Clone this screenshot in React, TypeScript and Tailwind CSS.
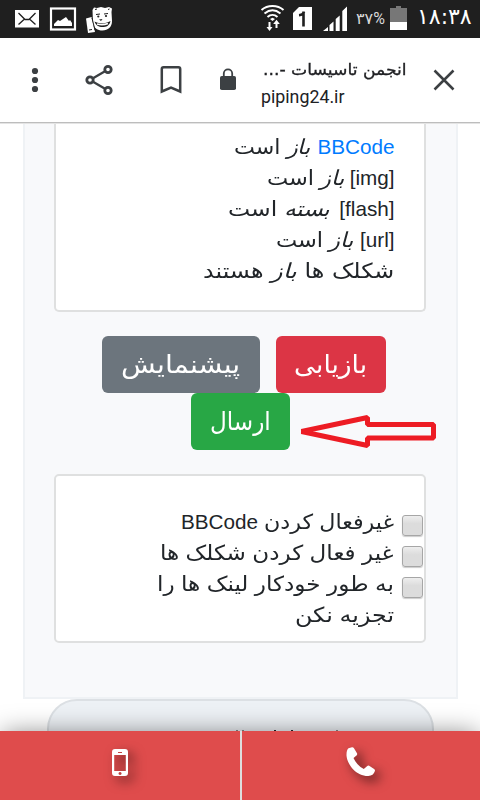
import React, { useLayoutEffect, useRef } from 'react';

// Stretches a run of text so that it fills the given width
function Fit({ width, children }: { width: number; children: React.ReactNode }) {
  const ref = useRef<HTMLSpanElement>(null);

  useLayoutEffect(() => {
    const el = ref.current;
    if (el) el.style.transform = `scaleX(${width / el.offsetWidth})`;
  }, [width]);

  return (
    <span className="inline-flex justify-start whitespace-nowrap" style={{ width }}>
      <span ref={ref} className="inline-block shrink-0 origin-right">{children}</span>
    </span>
  );
}

const statusRules = [
  { label: 'BBCode', state: 'باز', width: 76, gap: 'ml-[7px]', color: 'text-[#007bff]' },
  { label: '[img]', state: 'باز', width: 77, gap: 'ml-[6px]', color: '' },
  { label: '[flash]', state: 'بسته', width: 102, gap: 'ml-[9px]', color: '' },
  { label: '[url]', state: 'باز', width: 77, gap: 'ml-[7px]', color: '' },
];

function StatusBar() {
  return (
    <header dir="ltr" className="flex h-[38px] shrink-0 items-start bg-[#1f1f1f] text-white">
      <svg width="120" height="38" viewBox="0 0 120 38" fill="none">
        <rect x="15" y="10" width="24" height="17.500" fill="#fff" />
        <path d="M18.500 13l6.500 6.500h4l6.500-6.500M18.500 24.500l5.500-5M35.500 24.500l-5.500-5" stroke="#1f1f1f" strokeWidth="1.300" />
        <rect x="51" y="8.500" width="24" height="21" stroke="#fff" strokeWidth="2.200" />
        <path d="M54 26v-2l4-4 2 1 6-4 3 4 1-1 2 3v3z" fill="#fff" />
        <path d="M92.500 10l1.500-2.500 3 .5 4-1 4 1 4-1 3 1.500-.5 3.500.5 9c0 6-4 9.500-9.500 9.500-5 0-8.500-2.500-9.500-7z" fill="#fff" />
        <path d="M86 18.500l5.500-1.500 3.500 15-7 1z" fill="#fff" />
        <path d="M92 18l3 12M89 30l3-.5M96 14.500l4-.5M104 14l4-.5M95 9.500l2-.5M108 9.500l1.500-.5" stroke="#1f1f1f" strokeWidth="1" />
        <circle cx="98.300" cy="16.500" r="1.100" fill="#1f1f1f" />
        <circle cx="106" cy="16" r="1.100" fill="#1f1f1f" />
        <path d="M99 19.500l3.500-.5-1.500 2z" fill="#1f1f1f" />
        <path d="M94.500 21.500c4 2.500 11 2.500 16-.5-1 5-4.500 6-8 6-4 0-6.500-1.500-8-5.500z" fill="#1f1f1f" />
        <path d="M97 23.900c3.500 1 7.500.9 11-.5" stroke="#fff" strokeWidth="1.600" />
      </svg>
      <svg className="ml-[136px]" width="96" height="38" viewBox="256 0 96 38" fill="none">
        <path d="M261.500 10c6-5.300 16-5.300 22 0M264.500 13.500c5-4 11-4 16 0M267.500 17c3-2.600 7-2.600 10 0" stroke="#fff" strokeWidth="2" />
        <path d="M270 19l2.500-1.300L275 19l-2.500 2zM268.500 22h2v5h2l-3 4-3-4h2zM275.500 28h2v-4h2.300l-3.300-4.300-3.300 4.300h2.300z" fill="#fff" />
        <path d="M299 7h13v23h-19V13z" fill="#fff" />
        <path d="M303.500 11.500v15M304 12c-.6 2-2 3-5 3.200" stroke="#1f1f1f" strokeWidth="2.600" />
        <path d="M323 31l5-4v4zM329.500 31v-6l4-3.500V31zM335.700 31V19l4-3.500V31zM342.300 31V11l4.700-4.500V31z" fill="#fff" />
      </svg>
      <span className="mt-[9px] ml-[4px] w-[34px] whitespace-nowrap font-['Roboto','DejaVu_Sans',sans-serif] text-[16px] leading-[20px] text-[#d8d8d8]">۳۷%</span>
      <svg width="18" height="38" viewBox="0 0 18 38">
        <path d="M0 8h6V6h5v2h6v14H0z" fill="#777" />
        <rect y="22" width="17" height="8" fill="#fff" />
      </svg>
      <span className="mt-[3px] ml-[9px] whitespace-nowrap font-['DejaVu_Sans',sans-serif] text-[22px] leading-[28px]">۱۸:۳۸</span>
    </header>
  );
}

function Toolbar() {
  return (
    <nav dir="ltr" className="relative z-10 flex h-[85px] shrink-0 border-b border-[#bdbdbd] bg-white shadow-[0_1px_0_#e4e4e4]">
      <svg width="256" height="84" viewBox="0 38 256 84" fill="none" stroke="#3c4043">
        <g fill="#3c4043" stroke="none">
          <circle cx="35" cy="71" r="3.100" />
          <circle cx="35" cy="80" r="3.100" />
          <circle cx="35" cy="89" r="3.100" />
          <rect x="220" y="76" width="16" height="14" rx="1.800" />
        </g>
        <path d="M108 69.500L90 80l18 10.500" strokeWidth="2.300" />
        <g fill="#fff" strokeWidth="2.800">
          <circle cx="108" cy="69.500" r="3.200" />
          <circle cx="90" cy="80" r="3.200" />
          <circle cx="108" cy="90.500" r="3.200" />
        </g>
        <path d="M161.800 91.500V69q0-1.700 1.700-1.700h15q1.700 0 1.700 1.700v22.500l-9.200-4z" strokeWidth="2.500" />
        <path d="M223.800 76v-2.500a4.200 4.200 0 0 1 8.400 0V76" strokeWidth="1.800" />
      </svg>
      <div className="flex w-[151px] flex-col pt-[18px] text-[#202124]">
        <span dir="rtl" className="font-['DejaVu_Sans',sans-serif] text-[16px] leading-[28px] [-webkit-text-stroke:0.300px_#202124]">
          <Fit width={144}>انجمن تاسیسات -...</Fit>
        </span>
        <span className="pl-[5px] font-['Roboto',sans-serif] text-[17.800px] leading-[26px]">piping24.ir</span>
      </div>
      <svg width="73" height="84" viewBox="407 38 73 84" stroke="#3c4043" strokeWidth="2.500">
        <path d="M434.500 70.500l19 19M453.500 70.500l-19 19" />
      </svg>
    </nav>
  );
}

function Check({ children }: { children: React.ReactNode }) {
  return (
    <label className="flex items-start gap-[8px]">
      <span className="mt-[9px] h-[21px] w-[21px] shrink-0 rounded-[3px] border-[1.500px] border-[#a6a6a6] bg-linear-to-b from-[#eee] to-[#dcdcdc] to-40% shadow-[0_1px_1px_#ccc]" />
      <span className="leading-[31px] whitespace-nowrap">{children}</span>
    </label>
  );
}

function BottomBar() {
  return (
    <footer dir="ltr" className="absolute inset-x-0 bottom-0 flex h-[69px] bg-[#df4c4c] shadow-[0_0_26px_-3px_rgba(0,0,0,0.500)]">
      <a className="flex w-[240px]">
        <svg width="240" height="69" viewBox="0 731 240 69" className="drop-shadow-[5px_5px_6px_rgba(0,0,0,0.6)]">
          <path fillRule="evenodd" fill="#fff" d="M115 749h10q3 0 3 3v21q0 3-3 3h-10q-3 0-3-3v-21q0-3 3-3zm-.8 6v16h11.600v-16zm3.800-3v1h4v-1zm2 20a1.500 1.500 0 1 0 .1 0z" />
        </svg>
      </a>
      <a className="flex w-[240px] border-l-2 border-[#dedede]">
        <svg width="238" height="69" viewBox="242 731 238 69" className="drop-shadow-[5px_5px_6px_rgba(0,0,0,0.6)]">
          <path fill="#fff" d="M348.500 748.300l3.500-1q1.200-.2 1.800.8l3.200 5.200q.5 1-.2 1.900l-3.300 2.700q3 7 10.300 11.200l3.500-3.200q.9-.7 1.800-.1l5 3.200q1.200.8.8 2-1.500 4.800-6.600 5c-11.300.2-21-10.700-21.800-20.600q-.1-5.300 2-7.100z" />
        </svg>
      </a>
    </footer>
  );
}

export default function App() {
  return (
    <div dir="rtl" lang="fa" className="relative flex h-[800px] w-[480px] flex-col overflow-hidden bg-white font-['Liberation_Sans','DejaVu_Sans',sans-serif] text-[20.700px] text-[#212529]">
      <StatusBar />
      <Toolbar />
      <main className="mr-[22px] h-[576px] w-[435px] shrink-0 border-2 border-t-0 border-[#eff2f5] bg-[#f8f9fb] pr-[30px] pl-[29px]">
        <section className="h-[189px] rounded-b-[5px] border-2 border-t-0 border-[#dfe0e0] bg-white pt-[8px] pr-[29.500px]">
          {statusRules.map((rule) => (
            <p key={rule.label} className="flex h-[31px] leading-[31px] whitespace-nowrap">
              <bdi dir="ltr" className={`${rule.gap} ${rule.color}`}>{rule.label}</bdi>
              <Fit width={rule.width}><em>{rule.state}</em> است</Fit>
            </p>
          ))}
          <p className="h-[31px] leading-[31px] [word-spacing:1px]">
            <Fit width={191}>شکلک ها <em>باز</em> هستند</Fit>
          </p>
        </section>

        <div className="mt-[24px] flex justify-center gap-[16px] pl-[8px] text-[25px] text-white">
          <button className="h-[57px] w-[110px] rounded-[6px] bg-[#dc3545]"><Fit width={73}>بازیابی</Fit></button>
          <button className="h-[57px] w-[158px] rounded-[6px] bg-[#6c757d]"><Fit width={119}>پیشنمایش</Fit></button>
        </div>
        <div className="flex justify-center pl-px text-[25px] text-white">
          <button className="h-[57px] w-[99px] rounded-[6px] bg-[#28a745]"><Fit width={61}>ارسال</Fit></button>
        </div>

        <section className="mt-[24px] h-[169px] rounded-[5px] border-2 border-[#dfe0e0] bg-white pt-[30px] pr-px">
          <Check><Fit width={130}>غیرفعال کردن</Fit><bdi className="mr-[6px]">BBCode</bdi></Check>
          <Check><Fit width={234}>غیر فعال کردن شکلک ها</Fit></Check>
          <Check><Fit width={237}>به طور خودکار لینک ها را</Fit><br /><Fit width={99}>تجزیه نکن</Fit></Check>
        </section>
      </main>
      {/* next block: only the tops of its heading show above the bottom bar */}
      <div dir="ltr" className="mr-[46px] flex h-[101px] w-[387px] shrink-0 rounded-t-[30px] border-2 border-[#dce0e4] bg-[#edf1f5] pt-[29px] pl-[187px]">
        <span className="h-px w-[2px] bg-[#888]" />
        <span className="ml-[4px] h-px w-[2px] bg-[#888]" />
        <span className="ml-[30px] h-px w-[2px] bg-[#212529]" />
        <span className="ml-[15px] h-px w-[2px] bg-[#212529]" />
        <span className="ml-[43px] h-px w-[2px] bg-[#888]" />
      </div>
      <svg className="absolute top-[412px] left-[298px]" width="142" height="40" viewBox="298 412 142 40" fill="none" stroke="#ed1c24" strokeWidth="5">
        <path strokeLinejoin="bevel" d="M301.500 431.500L367.500 417.500v7h66V438h-66v7.500z" />
      </svg>
      <BottomBar />
    </div>
  );
}
